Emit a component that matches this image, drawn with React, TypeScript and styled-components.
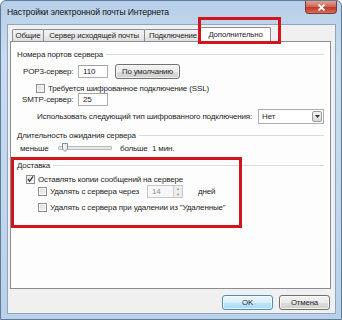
import styled, { createGlobalStyle } from 'styled-components'

const GlobalStyle = createGlobalStyle`
  html, body {
    margin: 0;
    padding: 0;
    width: 342px;
    height: 320px;
    overflow: hidden;
    background: #ffffff;
  }
  body {
    font-family: "Liberation Sans", Arial, sans-serif;
    font-size: 8px;
    letter-spacing: -0.15px;
    color: #1e1e1e;
  }
`

const Window = styled.div`
  position: relative;
  box-sizing: border-box;
  width: 342px;
  height: 320px;
  display: flex;
  flex-direction: column;
  padding: 0 5px 5px 6px;
  border: 1px solid #5f7b98;
  border-radius: 6px 6px 0 0;
  background: linear-gradient(180deg, #b6cfe8 0%, #c9dcef 18%, #c2d7ec 60%, #b9d0e8 100%);
`

const TitleBar = styled.div`
  height: 22px;
  display: flex;
  align-items: center;
  font-size: 8.6px;
  letter-spacing: -0.1px;
  color: #111;
  padding-bottom: 1px;
`

const CloseButton = styled.div`
  position: absolute;
  top: 0;
  right: 4px;
  width: 32px;
  height: 13px;
  box-sizing: border-box;
  border: 1px solid #7a3b3b;
  border-top: none;
  border-radius: 0 0 4px 4px;
  background: linear-gradient(180deg, #e3a08f 0%, #cf6a57 45%, #c0392b 55%, #d66e55 100%);
  display: flex;
  align-items: center;
  justify-content: center;
`

const Client = styled.div`
  flex: 1;
  display: flex;
  flex-direction: column;
  background: #f0f0f0;
  border: 1px solid #8fa5bd;
  padding: 2px 4px 0 2px;
  min-height: 0;
`

const TabStrip = styled.div`
  height: 14px;
  display: flex;
  align-items: flex-end;
  padding-left: 2px;
`

const Tab = styled.div<{ $w: number; $active?: boolean }>`
  box-sizing: border-box;
  width: ${(p) => p.$w}px;
  height: ${(p) => (p.$active ? 15 : 12)}px;
  margin-right: -1px;
  margin-bottom: ${(p) => (p.$active ? -1 : 0)}px;
  margin-left: ${(p) => (p.$active ? -1 : 0)}px;
  position: relative;
  z-index: ${(p) => (p.$active ? 2 : 1)};
  border: 1px solid #898c95;
  border-bottom: none;
  border-radius: 2px 2px 0 0;
  background: ${(p) => (p.$active ? '#ffffff' : 'linear-gradient(180deg, #f3f3f3 0%, #ebebeb 50%, #dedede 100%)')};
  display: flex;
  align-items: center;
  justify-content: center;
  white-space: nowrap;
  overflow: hidden;
  font-size: 7.8px;
  padding-bottom: ${(p) => (p.$active ? 2 : 0)}px;
`

const Panel = styled.div`
  position: relative;
  height: 248px;
  box-sizing: border-box;
  background: #fdfdfd;
  border: 1px solid #898c95;
  display: flex;
  flex-direction: column;
  padding: 6px 6px 0 0;
`

const GroupHeader = styled.div<{ $top: number }>`
  height: 12px;
  margin-top: ${(p) => p.$top}px;
  margin-left: 6px;
  display: flex;
  align-items: center;
  gap: 3px;
  white-space: nowrap;
  &::after {
    content: '';
    flex: 1;
    height: 1px;
    background: #d5dde3;
  }
`

const Row = styled.div<{ $top: number; $h: number; $indent: number }>`
  height: ${(p) => p.$h}px;
  margin-top: ${(p) => p.$top}px;
  padding-left: ${(p) => p.$indent}px;
  display: flex;
  align-items: center;
  white-space: nowrap;
`

const Label = styled.span<{ $w: number }>`
  flex: none;
  width: ${(p) => p.$w}px;
  overflow: visible;
`

const TextBox = styled.div<{ $w: number }>`
  box-sizing: border-box;
  width: ${(p) => p.$w}px;
  height: 13px;
  border: 1px solid #abadb3;
  border-top-color: #a0a3aa;
  background: #ffffff;
  display: flex;
  align-items: center;
  padding-left: 4px;
`

const PushButton = styled.div<{ $w: number; $default?: boolean }>`
  box-sizing: border-box;
  width: ${(p) => p.$w}px;
  height: 15px;
  border: 1px solid ${(p) => (p.$default ? '#4f8db8' : '#707070')};
  border-radius: 3px;
  background: ${(p) =>
    p.$default
      ? 'linear-gradient(180deg, #eaf6fd 0%, #d9f0fc 50%, #bee6fd 51%, #a7d9f5 100%)'
      : 'linear-gradient(180deg, #f2f2f2 0%, #ebebeb 50%, #dddddd 51%, #cfcfcf 100%)'};
  box-shadow: inset 0 0 0 1px rgba(255, 255, 255, 0.7);
  display: flex;
  align-items: center;
  justify-content: center;
  font-size: 7.8px;
`

const Check = styled.div`
  box-sizing: border-box;
  width: 9px;
  height: 9px;
  flex: none;
  border: 1px solid #8e8f8f;
  background: linear-gradient(135deg, #d8d8d8 0%, #ececec 60%, #f8f8f8 100%);
  box-shadow: inset 0 0 0 1px #f4f4f4;
  display: flex;
  align-items: center;
  justify-content: center;
  margin-right: 3px;
`

const Select = styled.div`
  box-sizing: border-box;
  width: 66px;
  height: 15px;
  margin-left: auto;
  border: 1px solid #abadb3;
  background: #ffffff;
  display: flex;
  align-items: center;
  padding: 0 1px 0 3px;
  justify-content: space-between;
`

const DropArrow = styled.div`
  box-sizing: border-box;
  width: 10px;
  height: 11px;
  border: 1px solid #9a9a9a;
  border-radius: 2px;
  background: linear-gradient(180deg, #f4f4f4, #d8d8d8);
  display: flex;
  align-items: center;
  justify-content: center;
`

const SliderTrack = styled.div`
  position: relative;
  flex: none;
  width: 52px;
  height: 2px;
  margin-right: 8px;
  border: 1px solid #b8b8b8;
  border-radius: 1px;
  background: #e7eaea;
`

const SliderThumb = styled.svg`
  position: absolute;
  left: 3px;
  top: -4px;
`

const Spinner = styled.div`
  box-sizing: border-box;
  flex: none;
  width: 36px;
  height: 13px;
  margin-right: 15px;
  border: 1px solid #c5c7cb;
  background: #f7f7f7;
  color: #8d8d8d;
  display: flex;
  align-items: stretch;
`

const SpinValue = styled.span`
  flex: 1;
  display: flex;
  align-items: center;
  padding-left: 4px;
`

const SpinArrows = styled.div`
  width: 8px;
  display: flex;
  flex-direction: column;
  border-left: 1px solid #d0d0d0;
  background: #ededed;
  font-size: 4px;
  line-height: 5.5px;
  text-align: center;
  color: #9a9a9a;
`

const Footer = styled.div`
  flex: 1;
  display: flex;
  justify-content: flex-end;
  align-items: flex-start;
  gap: 6px;
  padding-top: 6px;
  padding-right: 1px;
`

const Highlight = styled.div<{ $x: number; $y: number; $w: number; $h: number }>`
  position: absolute;
  left: ${(p) => p.$x}px;
  top: ${(p) => p.$y}px;
  width: ${(p) => p.$w}px;
  height: ${(p) => p.$h}px;
  box-sizing: border-box;
  border: 3px solid #d3141e;
  pointer-events: none;
  z-index: 5;
`

const Gap = styled.span<{ $w: number }>`
  display: inline-block;
  flex: none;
  width: ${(p) => p.$w}px;
`

function Tick() {
  return (
    <svg width="8" height="8" viewBox="0 0 8 8">
      <path d="M1 4 L3 6.5 L7 1" fill="none" stroke="#2a3a4a" strokeWidth="1.4" />
    </svg>
  )
}

export default function App() {
  return (
    <>
      <GlobalStyle />
      <Window>
        <TitleBar>Настройки электронной почты Интернета</TitleBar>
        <CloseButton>
          <svg width="9" height="7" viewBox="0 0 9 7">
            <path d="M1.5 0.5 L7.5 6.5 M7.5 0.5 L1.5 6.5" stroke="#ffffff" strokeWidth="1.8" />
          </svg>
        </CloseButton>
        <Highlight $x={197} $y={16} $w={83} $h={27} />
        <Client>
          <TabStrip>
            <Tab $w={32}>Общие</Tab>
            <Tab $w={102}>Сервер исходящей почты</Tab>
            <Tab $w={58}>Подключение</Tab>
            <Tab $w={71} $active>
              Дополнительно
            </Tab>
          </TabStrip>
          <Panel>
            <Highlight $x={0} $y={115} $w={231} $h={71} />
            <GroupHeader $top={0}>Номера портов сервера</GroupHeader>
            <Row $top={4} $h={14} $indent={12}>
              <Label $w={55}>POP3-сервер:</Label>
              <TextBox $w={30}>110</TextBox>
              <Gap $w={7} />
              <PushButton $w={65}>По умолчанию</PushButton>
            </Row>
            <Row $top={5} $h={10} $indent={25}>
              <Check />
              Требуется шифрованное подключение (SSL)
            </Row>
            <Row $top={0} $h={13} $indent={11}>
              <Label $w={56}>SMTP-сервер:</Label>
              <TextBox $w={30}>25</TextBox>
            </Row>
            <Row $top={3} $h={15} $indent={26}>
              Использовать следующий тип шифрованного подключения:
              <Select>
                Нет
                <DropArrow>
                  <svg width="5" height="3" viewBox="0 0 5 3">
                    <path d="M0 0 H5 L2.5 3 Z" fill="#333" />
                  </svg>
                </DropArrow>
              </Select>
            </Row>
            <GroupHeader $top={5}>Длительность ожидания сервера</GroupHeader>
            <Row $top={1} $h={12} $indent={9}>
              <Label $w={38}>меньше</Label>
              <SliderTrack>
                <SliderThumb width="6" height="9" viewBox="0 0 6 9">
                  <path d="M0.5 0.5 H5.5 V6 L3 8.5 L0.5 6 Z" fill="#e9eef2" stroke="#8a8f94" />
                </SliderThumb>
              </SliderTrack>
              <Label $w={32}>больше</Label>
              1 мин.
            </Row>
            <GroupHeader $top={5}>Доставка</GroupHeader>
            <Row $top={3} $h={10} $indent={15}>
              <Check>
                <Tick />
              </Check>
              Оставлять копии сообщений на сервере
            </Row>
            <Row $top={1} $h={13} $indent={27}>
              <Check />
              <Label $w={97}>Удалять с сервера через</Label>
              <Spinner>
                <SpinValue>14</SpinValue>
                <SpinArrows>
                  <span>▲</span>
                  <span>▼</span>
                </SpinArrows>
              </Spinner>
              дней
            </Row>
            <Row $top={4} $h={10} $indent={27}>
              <Check />
              Удалять с сервера при удалении из "Удаленные"
            </Row>
          </Panel>
          <Footer>
            <PushButton $w={51} $default>
              OK
            </PushButton>
            <PushButton $w={51}>Отмена</PushButton>
          </Footer>
        </Client>
      </Window>
    </>
  )
}
